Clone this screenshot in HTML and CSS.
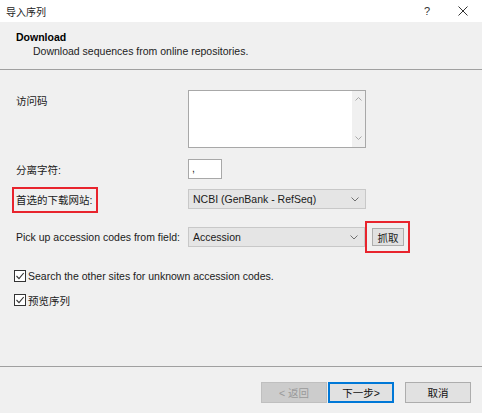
FILE: index.html
```html
<!DOCTYPE html>
<html lang="zh">
<head>
    <meta charset="UTF-8">
    <title>导入序列</title>
    <link rel="stylesheet" href="styles.css">
</head>
<body>
    <div class="dialog">
        <div class="titlebar">
            <span class="title">导入序列</span>
            <span class="tb-btn help">?</span>
            <span class="tb-btn close">
                <svg width="10" height="10" viewBox="0 0 10 10"><path d="M0.5 0.5L9.5 9.5M9.5 0.5L0.5 9.5" stroke="#333" stroke-width="1"/></svg>
            </span>
        </div>
        <div class="header">
            <div class="h-title">Download</div>
            <div class="h-sub">Download sequences from online repositories.</div>
        </div>
        <div class="content">
            <div class="row row-code">
                <div class="label">访问码</div>
                <div class="memo">
                    <div class="memo-scroll">
                        <svg width="7" height="4" viewBox="0 0 7 4"><path d="M0.5 3.5L3.5 0.5L6.5 3.5" fill="none" stroke="#a8a8a8"/></svg>
                        <svg width="7" height="4" viewBox="0 0 7 4"><path d="M0.5 0.5L3.5 3.5L6.5 0.5" fill="none" stroke="#a8a8a8"/></svg>
                    </div>
                </div>
            </div>
            <div class="row row-sep">
                <div class="label">分离字符:</div>
                <div class="edit">,</div>
            </div>
            <div class="row row-site">
                <div class="label"><span class="mark mark-label">首选的下载网站:</span></div>
                <div class="combo combo-site">
                    <span>NCBI (GenBank - RefSeq)</span>
                    <svg width="8" height="5" viewBox="0 0 8 5"><path d="M0.5 0.5L4 4L7.5 0.5" fill="none" stroke="#707070"/></svg>
                </div>
            </div>
            <div class="row row-field">
                <div class="label">Pick up accession codes from field:</div>
                <div class="field-ctrls">
                    <div class="combo combo-field">
                        <span>Accession</span>
                        <svg width="8" height="5" viewBox="0 0 8 5"><path d="M0.5 0.5L4 4L7.5 0.5" fill="none" stroke="#707070"/></svg>
                    </div>
                    <span class="mark mark-btn"><span class="btn-fetch">抓取</span></span>
                </div>
            </div>
            <label class="check check-first"><span class="box"><svg width="10" height="10" viewBox="0 0 10 10"><path d="M1.5 5L4 7.6L8.7 2" fill="none" stroke="#333" stroke-width="1.1"/></svg></span>Search the other sites for unknown accession codes.</label>
            <label class="check"><span class="box"><svg width="10" height="10" viewBox="0 0 10 10"><path d="M1.5 5L4 7.6L8.7 2" fill="none" stroke="#333" stroke-width="1.1"/></svg></span>预览序列</label>
        </div>
        <div class="footer">
            <span class="btn btn-off">&lt; 返回</span>
            <span class="btn btn-default">下一步&gt;</span>
            <span class="btn btn-cancel">取消</span>
        </div>
    </div>
</body>
</html>
```

FILE: styles.css
```css
* {
    margin: 0;
    padding: 0;
    box-sizing: border-box;
}

body {
    width: 482px;
    height: 413px;
    background: #f0f0f0;
    font-family: "Liberation Sans", "Noto Sans CJK SC", sans-serif;
    font-size: 10.5px;
    color: #1a1a1a;
    overflow: hidden;
}

.dialog {
    width: 482px;
    height: 413px;
    display: flex;
    flex-direction: column;
}

.titlebar {
    height: 22px;
    background: #fff;
    display: flex;
    align-items: center;
    padding-left: 6px;
}

.titlebar .title {
    flex: 1;
    font-size: 10px;
    color: #222;
}

.tb-btn {
    display: flex;
    align-items: center;
    justify-content: center;
    width: 30px;
    height: 22px;
    color: #333;
}

.tb-btn.help {
    font-size: 11px;
    margin-right: 6px;
}

.tb-btn.close {
    margin-right: 4px;
}

.header {
    height: 48px;
    background: #f0f0f0;
    border-bottom: 1px solid #a0a0a0;
    padding: 8px 0 0 16px;
    line-height: 14px;
}

.h-title {
    font-weight: bold;
    color: #000;
}

.h-sub {
    padding-left: 17px;
    color: #222;
}

.content {
    flex: 1;
    padding: 20px 0 0 16px;
}

.row {
    display: flex;
    align-items: center;
}

.label {
    width: 172px;
    flex: none;
}

.row-code {
    align-items: flex-start;
}

.row-code .label {
    padding-top: 3px;
}

.memo {
    width: 178px;
    height: 58px;
    background: #fff;
    border: 1px solid #a8a8a8;
    display: flex;
    justify-content: flex-end;
}

.memo-scroll {
    width: 13px;
    background: #f0f0f0;
    display: flex;
    flex-direction: column;
    justify-content: space-between;
    align-items: center;
    padding: 6px 0 7px;
}

.row-sep {
    margin-top: 11px;
}

.edit {
    width: 34px;
    height: 20px;
    background: #fff;
    border: 1px solid #a8a8a8;
    padding-left: 3px;
    line-height: 16px;
}

.row-site {
    margin-top: 10px;
}

.mark {
    position: relative;
}

.mark::after {
    content: "";
    position: absolute;
    border: 2px solid #e8242d;
}

.mark-label::after {
    left: -4px;
    right: -6px;
    top: -7px;
    bottom: -7px;
}

.combo {
    height: 20px;
    background: #e5e5e5;
    border: 1px solid #c8c8c8;
    display: flex;
    align-items: center;
    justify-content: space-between;
    padding: 0 6px 0 4px;
}

.combo-site {
    width: 178px;
}

.row-field {
    margin-top: 18px;
}

.field-ctrls {
    display: flex;
    align-items: center;
    gap: 7px;
}

.combo-field {
    width: 177px;
}

.btn-fetch {
    display: flex;
    align-items: center;
    justify-content: center;
    width: 32px;
    height: 18px;
    background: #e1e1e1;
    border: 1px solid #adadad;
}

.mark-btn::after {
    left: -7px;
    right: -6px;
    top: -7px;
    bottom: -7px;
}

.check {
    display: flex;
    align-items: center;
    margin-left: -2px;
    height: 14px;
}

.check-first {
    margin-top: 22px;
}

.check + .check {
    margin-top: 10px;
}

.box {
    width: 12px;
    height: 12px;
    background: #fff;
    border: 1px solid #333;
    margin-right: 2px;
    display: flex;
    align-items: center;
    justify-content: center;
}

.footer {
    height: 47px;
    border-top: 1px solid #a0a0a0;
    display: flex;
    justify-content: flex-end;
    padding: 15px 11px 0 0;
}

.btn {
    width: 66px;
    height: 21px;
    display: flex;
    align-items: center;
    justify-content: center;
    background: #e1e1e1;
    border: 1px solid #adadad;
    color: #111;
}

.btn-off {
    background: #cccccc;
    border-color: #bfbfbf;
    color: #9a9a9a;
    margin-right: 1px;
}

.btn-default {
    border: 2px solid #0078d7;
    margin-right: 11px;
}
```
